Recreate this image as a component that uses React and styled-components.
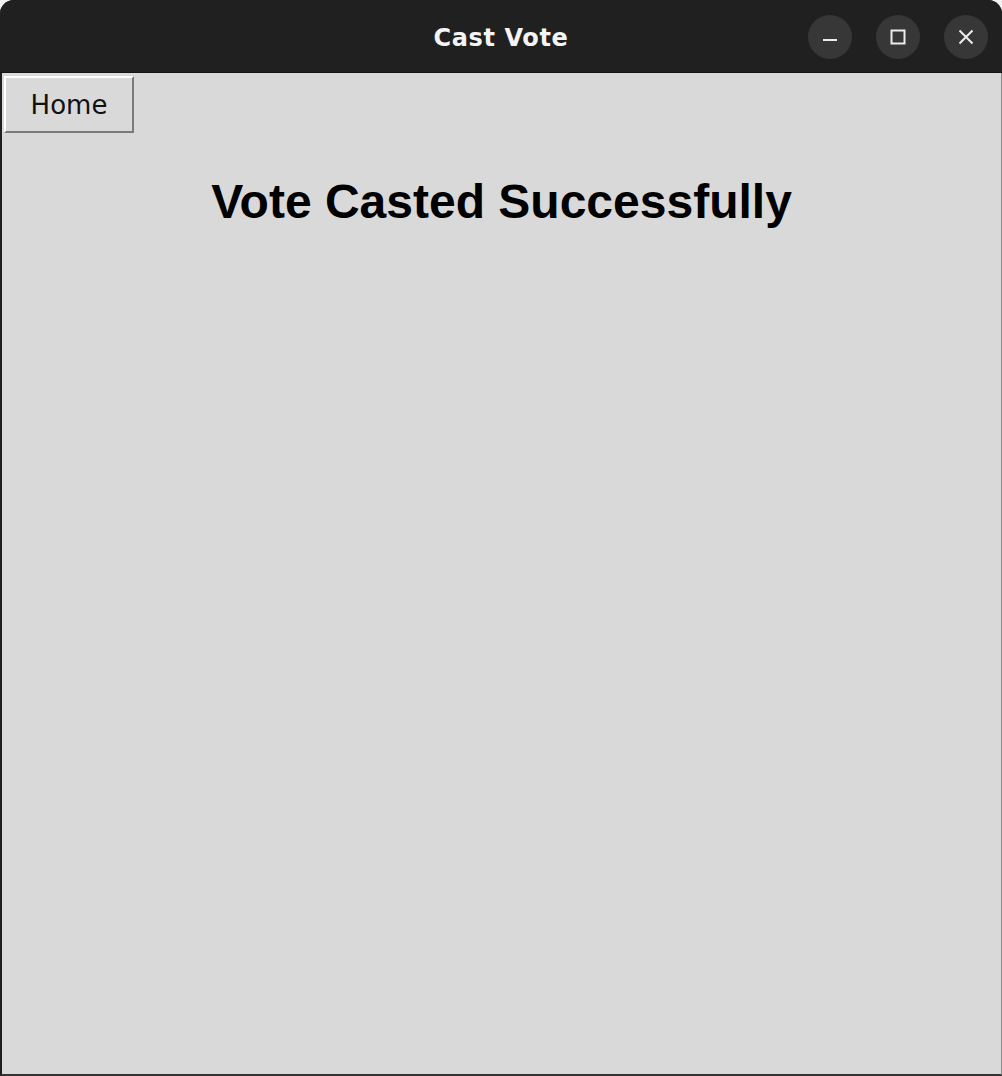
import React from "react";
import styled, { createGlobalStyle } from "styled-components";

const GlobalStyle = createGlobalStyle`
  html, body {
    margin: 0;
    padding: 0;
    background: #f2f2f2;
  }
`;

const Window = styled.div`
  width: 1002px;
  height: 1076px;
  display: flex;
  flex-direction: column;
  background: #202020;
  border-radius: 14px 14px 0 0;
  overflow: hidden;
  box-sizing: border-box;
`;

const TitleBar = styled.div`
  height: 73px;
  flex-shrink: 0;
  display: flex;
  align-items: center;
  justify-content: center;
  position: relative;
  background: #202020;
  border-bottom: 1px solid #141414;
  box-sizing: border-box;
  padding-top: 3px;
`;

const Title = styled.h1`
  margin: 0;
  font-family: "DejaVu Sans", sans-serif;
  font-weight: bold;
  font-size: 24px;
  letter-spacing: 0.6px;
  color: #f4f4f4;
`;

const Controls = styled.div`
  position: absolute;
  right: 14px;
  top: 15px;
  display: flex;
  gap: 24px;
`;

const CircleButton = styled.button`
  width: 44px;
  height: 44px;
  border-radius: 50%;
  border: none;
  padding: 0;
  background: #373737;
  display: flex;
  align-items: center;
  justify-content: center;
  color: #ececec;
`;

const Content = styled.main`
  flex: 1;
  background: #d9d9d9;
  border-left: 2px solid #1e1e1e;
  border-right: 1px solid #8a8a8a;
  border-bottom: 2px solid #333;
  display: flex;
  flex-direction: column;
  align-items: flex-start;
  padding: 3px 0 0 2px;
`;

const HomeButton = styled.button`
  width: 130px;
  height: 57px;
  box-sizing: border-box;
  background: #d9d9d9;
  border: 2px solid;
  border-color: #ffffff #7a7a7a #7a7a7a #ffffff;
  font-family: "DejaVu Sans", sans-serif;
  font-size: 26px;
  color: #111;
  padding: 0;
`;

const Heading = styled.h2`
  align-self: stretch;
  margin: 41px 0 0 -2px;
  text-align: center;
  font-family: "Liberation Sans", Arial, sans-serif;
  font-weight: bold;
  font-size: 48px;
  color: #000;
`;

const Minimize = () => (
  <svg width="18" height="18" viewBox="0 0 18 18">
    <rect x="2" y="11" width="14" height="2" fill="currentColor" />
  </svg>
);

const Maximize = () => (
  <svg width="18" height="18" viewBox="0 0 18 18">
    <rect x="2.5" y="2.5" width="13" height="13" fill="none" stroke="currentColor" strokeWidth="2" />
  </svg>
);

const Close = () => (
  <svg width="18" height="18" viewBox="0 0 18 18">
    <path d="M2.5 2.5 L15.5 15.5 M15.5 2.5 L2.5 15.5" stroke="currentColor" strokeWidth="2" />
  </svg>
);

export default function App() {
  return (
    <>
      <GlobalStyle />
      <Window>
        <TitleBar>
          <Title>Cast Vote</Title>
          <Controls>
            <CircleButton aria-label="Minimize"><Minimize /></CircleButton>
            <CircleButton aria-label="Maximize"><Maximize /></CircleButton>
            <CircleButton aria-label="Close"><Close /></CircleButton>
          </Controls>
        </TitleBar>
        <Content>
          <HomeButton>Home</HomeButton>
          <Heading>Vote Casted Successfully</Heading>
        </Content>
      </Window>
    </>
  );
}
